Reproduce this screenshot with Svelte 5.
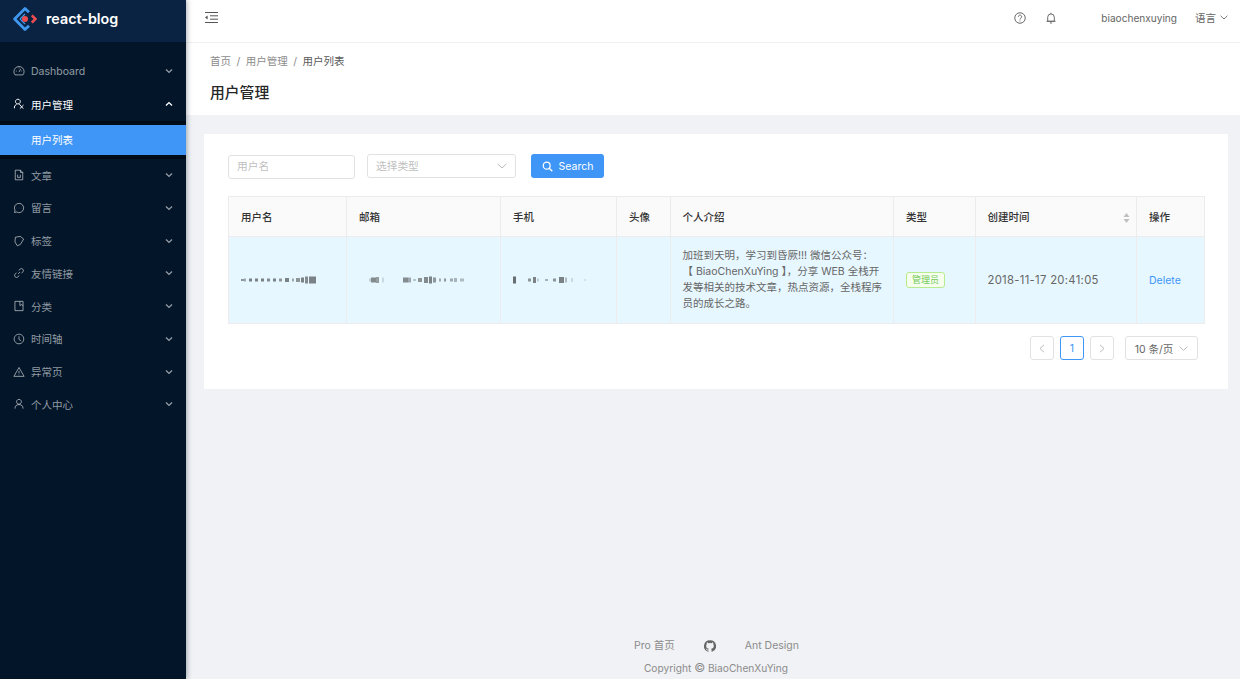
<script>
  const menu = [
    { name: 'Dashboard', icon: 'dash' },
    { name: '用户管理', icon: 'users', open: true, children: ['用户列表'] },
    { name: '文章', icon: 'file' },
    { name: '留言', icon: 'msg' },
    { name: '标签', icon: 'tag' },
    { name: '友情链接', icon: 'link' },
    { name: '分类', icon: 'book' },
    { name: '时间轴', icon: 'clock' },
    { name: '异常页', icon: 'warn' },
    { name: '个人中心', icon: 'user' }
  ];

  const icons = {
    dash: 'M2.8 13.2A6.8 6.8 0 1 1 13.2 13.2ZM8 9.4 10.2 5.4M8 3.4V4.6M3.8 8H5M11.2 8H12.2',
    users: 'M6.6 1.6a3.2 3.2 0 1 1-.1 0ZM1.8 13.8a5 5 0 0 1 3-5.4M8.4 8.2l5.2 6M14 9.4l-4.8 4.8',
    file: 'M3 1.6H10L13 4.6V14.4H3ZM10 1.6V4.6H13M6.2 7.6V11.2H9.8V7.6',
    msg: 'M8 1.8a6.2 6.2 0 1 1-3.2 11.5L2 14l.7-2.8A6.2 6.2 0 0 1 8 1.8ZM5 8H5.3M7.9 8H8.2M10.8 8H11.1',
    tag: 'M3.2 3 9.6 1.8 14.2 5.4 9.8 12.6 5.8 14.4 2.6 9.2ZM10.2 5H10.4',
    link: 'M6.8 9.2 9.4 6.6M7.6 4.6 9.4 2.9a2.6 2.6 0 0 1 3.7 3.7L11.3 8.4M8.4 11.4 6.6 13.1a2.6 2.6 0 0 1-3.7-3.7L4.7 7.6',
    book: 'M2.6 1.8H13.4V14.2H2.6ZM9.2 1.8V7.4L11.2 6.2 13.4 7.4',
    clock: 'M8 1.6a6.4 6.4 0 1 1-.1 0ZM8 4.4V8.6L10.6 10.4',
    warn: 'M8 2 14.8 13.8H1.2ZM8 6.4V10M8 11.4V12.2',
    user: 'M8 1.8a3.2 3.2 0 1 1-.1 0ZM2.6 14.2a5.4 5.4 0 0 1 10.8 0'
  };

  const columns = [
    { title: '用户名', width: 118 },
    { title: '邮箱', width: 154 },
    { title: '手机', width: 116 },
    { title: '头像', width: 53.5 },
    { title: '个人介绍', width: 223.5 },
    { title: '类型', width: 81.5 },
    { title: '创建时间', width: 161.5, sort: true },
    { title: '操作', width: 68 }
  ];

  // pixelated masks of the private values: [x, width, height, darkness]
  const nameBlur = [[0,3,2,.5],[3,2,3,.4],[8,3,3,.6],[14,3,3,.6],[20,3,3,.6],[26,3,3,.55],[32,3,3,.6],[38,3,3,.5],[44,4,4,.6],[51,2,3,.4],[55,4,4,.5],[60,3,5,.6],[64,3,7,.55],[68,7,7,.6]];
  const mailBlur = [[0,2,3,.2],[2,5,5,.55],[7,3,6,.45],[13,2,5,.15],[34,5,5,.55],[39,3,5,.4],[44,3,2,.25],[49,4,4,.5],[55,4,6,.55],[60,3,7,.6],[64,3,5,.5],[70,2,3,.4],[75,2,3,.5],[81,3,3,.4],[85,3,4,.35],[91,4,3,.3]];
  const phoneBlur = [[0,3,7,.7],[15,3,3,.5],[20,3,6,.6],[24,2,3,.2],[32,3,2,.35],[40,3,3,.5],[46,5,6,.6],[52,2,5,.3],[58,2,4,.15],[71,2,2,.1]];
</script>

{#snippet blur(cells)}
  <svg class="blur" width="100" height="10" viewBox="0 0 100 10" aria-hidden="true">
    {#each cells as c}
      <rect x={c[0]} y={5 - c[2] / 2} width={c[1]} height={c[2]} fill="#333" opacity={c[3]} />
    {/each}
  </svg>
{/snippet}

{#snippet chevron(up)}
  <svg class="arrow" width="8" height="6" viewBox="0 0 8 6" aria-hidden="true">
    <path d={up ? 'M1 4.4 4 1.6 7 4.4' : 'M1 1.6 4 4.4 7 1.6'} fill="none" stroke="currentColor" stroke-width="1.4" />
  </svg>
{/snippet}

<div class="layout">
  <aside class="sider">
    <div class="logo">
      <svg width="24" height="24" viewBox="0 0 24 24" aria-hidden="true">
        <path d="M16 5.3 12 1.6 1.6 12 12 22.4 16 18.7" fill="none" stroke="#3f97ee" stroke-width="2.8" stroke-linejoin="round" />
        <path d="M7 12 12 7M7 12 12 17" fill="none" stroke="#3f97ee" stroke-width="1.2" />
        <path d="M18.8 8.4 22.4 12 18.8 15.6" fill="none" stroke="#ec4d4f" stroke-width="2.6" />
        <circle cx="12" cy="12" r="3" fill="#ec4d4f" />
      </svg>
      <span>react-blog</span>
    </div>
    <nav class="menu">
      {#each menu as item}
        <div class="item" class:open={item.open}>
          <svg class="icon" width="12" height="12" viewBox="0 0 16 16" aria-hidden="true">
            <path d={icons[item.icon]} fill="none" stroke="currentColor" stroke-width="1.3" />
          </svg>
          <span class="label">{item.name}</span>
          {@render chevron(item.open)}
        </div>
        {#if item.children}
          <div class="submenu">
            {#each item.children as child}
              <div class="subitem">{child}</div>
            {/each}
          </div>
        {/if}
      {/each}
    </nav>
  </aside>

  <main class="main">
    <header class="topbar">
      <svg class="fold" width="13" height="11" viewBox="0 0 13 11" aria-hidden="true">
        <path d="M0 .5H13M5 3.8H13M5 7.2H13M0 10.5H13" stroke="#555" stroke-width="1" fill="none" />
        <path d="M0 5.5 2.6 3.6V7.4Z" fill="#555" />
      </svg>
      <div class="spacer"></div>
      <svg class="tool" width="12" height="12" viewBox="0 0 16 16" aria-hidden="true">
        <circle cx="8" cy="8" r="7" fill="none" stroke="#666" stroke-width="1.3" />
        <path d="M5.8 6.2a2.2 2.2 0 1 1 3.4 1.9C8.4 8.6 8 9 8 10M8 11.4V12.6" fill="none" stroke="#666" stroke-width="1.3" />
      </svg>
      <svg class="tool bell" width="12" height="12" viewBox="0 0 16 16" aria-hidden="true">
        <path d="M8 1V2.4M3.6 12.4V7a4.4 4.4 0 0 1 8.8 0V12.4ZM2 12.4H14M6.6 14.6H9.4" fill="none" stroke="#666" stroke-width="1.3" />
      </svg>
      <span class="username">biaochenxuying</span>
      <span class="lang">语言</span>
      <svg class="lang-arrow" width="8" height="5" viewBox="0 0 8 5" aria-hidden="true">
        <path d="M.6.8 4 4 7.4.8" fill="none" stroke="#777" />
      </svg>
    </header>

    <section class="page-head">
      <div class="crumbs">
        <span>首页</span><i>/</i><span>用户管理</span><i>/</i><span class="current">用户列表</span>
      </div>
      <h1>用户管理</h1>
    </section>

    <section class="card">
      <div class="filters">
        <div class="input">用户名</div>
        <div class="select">
          <span>选择类型</span>
          <svg width="10" height="6" viewBox="0 0 10 6" aria-hidden="true"><path d="M.6.8 5 5 9.4.8" fill="none" stroke="#bbb" /></svg>
        </div>
        <button class="search">
          <svg width="11" height="11" viewBox="0 0 16 16" aria-hidden="true">
            <circle cx="6.8" cy="6.8" r="5" fill="none" stroke="#fff" stroke-width="1.8" />
            <path d="M10.5 10.5 15 15" stroke="#fff" stroke-width="1.8" />
          </svg>
          Search
        </button>
      </div>

      <table>
        <colgroup>
          {#each columns as col}
            <col style="width: {col.width}px" />
          {/each}
        </colgroup>
        <thead>
          <tr>
            {#each columns as col}
              <th>
                {col.title}
                {#if col.sort}
                  <svg class="sorter" width="7" height="10" viewBox="0 0 7 10" aria-hidden="true">
                    <path d="M3.5 0 6.5 4H.5ZM3.5 10 .5 6H6.5Z" fill="#bfbfbf" />
                  </svg>
                {/if}
              </th>
            {/each}
          </tr>
        </thead>
        <tbody>
          <tr>
            <td>{@render blur(nameBlur)}</td>
            <td class="mail-cell">{@render blur(mailBlur)}</td>
            <td>{@render blur(phoneBlur)}</td>
            <td></td>
            <td class="intro">加班到天明，学习到昏厥!!! 微信公众号：<br />【 BiaoChenXuYing 】，分享 WEB 全栈开<br />发等相关的技术文章，热点资源，全栈程序<br />员的成长之路。</td>
            <td><span class="tag">管理员</span></td>
            <td class="date">2018-11-17 20:41:05</td>
            <td><span class="delete">Delete</span></td>
          </tr>
        </tbody>
      </table>

      <div class="pager">
        <span class="page">
          <svg width="6" height="9" viewBox="0 0 6 9" aria-hidden="true"><path d="M5 .8 1 4.5 5 8.2" fill="none" stroke="#bbb" /></svg>
        </span>
        <span class="page active">1</span>
        <span class="page">
          <svg width="6" height="9" viewBox="0 0 6 9" aria-hidden="true"><path d="M1 .8 5 4.5 1 8.2" fill="none" stroke="#bbb" /></svg>
        </span>
        <span class="size">
          10 条/页
          <svg width="9" height="5" viewBox="0 0 9 5" aria-hidden="true"><path d="M.5.6 4.5 4.4 8.5.6" fill="none" stroke="#bbb" /></svg>
        </span>
      </div>
    </section>

    <footer class="footer">
      <div class="links">
        <span>Pro 首页</span>
        <svg width="12" height="12" viewBox="0 0 16 16" aria-hidden="true">
          <path fill="#666" d="M8 .2a8 8 0 0 0-2.5 15.6c.4.1.5-.2.5-.4v-1.4c-2.2.5-2.7-1-2.7-1-.4-.9-.9-1.2-.9-1.2-.7-.5.1-.5.1-.5.8.1 1.2.8 1.2.8.7 1.2 1.9.9 2.3.7.1-.5.3-.9.5-1.1-1.8-.2-3.6-.9-3.6-4 0-.9.3-1.6.8-2.1-.1-.2-.4-1 .1-2.1 0 0 .7-.2 2.2.8a7.6 7.6 0 0 1 4 0c1.5-1 2.2-.8 2.2-.8.5 1.1.2 1.9.1 2.1.5.5.8 1.2.8 2.1 0 3.1-1.9 3.8-3.6 4 .3.2.6.7.6 1.5v2.2c0 .2.1.5.5.4A8 8 0 0 0 8 .2Z" />
        </svg>
        <span>Ant Design</span>
      </div>
      <div class="copy">Copyright <span class="circle">©</span> BiaoChenXuYing</div>
    </footer>
  </main>
</div>

<style>
  :global(body) {
    margin: 0;
    overflow: hidden;
    font-family: Inter, "Noto Sans CJK SC", sans-serif;
  }
  .layout {
    display: flex;
    height: 679px;
    background: #f0f2f5;
    font-size: 10.5px;
    color: #666;
  }

  .sider {
    position: relative;
    z-index: 2;
    width: 186px;
    flex: none;
    background: #021529;
    box-shadow: 1px 0 5px rgba(0, 21, 41, 0.35);
  }
  .logo {
    height: 42px;
    box-sizing: border-box;
    display: flex;
    align-items: center;
    gap: 9px;
    padding: 0 0 5px 13px;
    background: #0a2342;
    color: #fff;
    font-size: 14.3px;
    font-weight: 600;
  }
  .menu {
    padding-top: 13px;
  }
  .item {
    height: 32.75px;
    display: flex;
    align-items: center;
    padding-left: 13px;
    padding-right: 13px;
    color: rgba(255, 255, 255, 0.58);
  }
  .item.open {
    color: #fff;
  }
  .icon {
    margin-right: 6px;
  }
  .label {
    flex: 1;
  }
  .submenu {
    background: #000c17;
    padding: 4.4px 0 3.9px;
  }
  .subitem {
    height: 30px;
    line-height: 31px;
    padding-left: 31px;
    background: #4096f7;
    color: #fff;
  }

  .main {
    flex: 1;
    min-width: 0;
    display: flex;
    flex-direction: column;
  }
  .topbar {
    height: 43px;
    box-sizing: border-box;
    display: flex;
    align-items: center;
    background: #fff;
    border-bottom: 1px solid #f0f0f0;
    padding: 0 12px 7px 19px;
  }
  .topbar > * {
    flex: none;
  }
  .topbar .spacer {
    flex: 1;
  }
  .tool {
    margin-top: 1px;
  }
  .bell {
    margin-left: 19px;
  }
  .username {
    margin-left: 44px;
    font-size: 10.1px;
  }
  .lang {
    margin-left: 18px;
  }
  .lang-arrow {
    margin-left: 4px;
  }

  .page-head {
    height: 72px;
    box-sizing: border-box;
    background: #fff;
    padding: 11px 24px 0;
  }
  .crumbs {
    line-height: 15px;
    color: #8c8c8c;
  }
  .crumbs i {
    font-style: normal;
    margin: 0 5.5px;
  }
  .crumbs .current {
    color: #595959;
  }
  h1 {
    margin: 13px 0 0;
    font-size: 14.8px;
    line-height: 22px;
    font-weight: 500;
    color: #262626;
  }

  .card {
    margin: 19px 12px 0 18px;
    height: 255px;
    box-sizing: border-box;
    background: #fff;
    padding: 20px 24px 0;
  }
  .filters {
    display: flex;
    align-items: center;
    height: 24px;
    margin-bottom: 18px;
  }
  .input,
  .select {
    height: 24px;
    box-sizing: border-box;
    border: 1px solid #e2e2e2;
    border-radius: 3px;
    color: #bfbfbf;
    line-height: 22px;
    padding-left: 8px;
    font-size: 10.7px;
  }
  .input {
    width: 127px;
    margin-right: 12px;
    margin-top: 1px;
  }
  .select {
    width: 149px;
    margin-right: 15px;
    display: flex;
    align-items: center;
    justify-content: space-between;
    padding-right: 8px;
  }
  .select span {
    margin-top: 2px;
  }
  .search {
    width: 73px;
    height: 24px;
    border: none;
    border-radius: 3px;
    background: #4096f7;
    color: #fff;
    font: inherit;
    display: flex;
    align-items: center;
    justify-content: center;
    gap: 6px;
    padding: 0;
  }

  table {
    table-layout: fixed;
    width: 976px;
    border-collapse: collapse;
    border: 1px solid #ececec;
  }
  th,
  td {
    border: 1px solid #ececec;
    padding: 0 12px;
    text-align: left;
  }
  th {
    position: relative;
    height: 39px;
    background: #fafafa;
    color: #333;
    font-weight: 500;
  }
  td {
    height: 86px;
    background: #e6f7ff;
  }
  .sorter {
    position: absolute;
    right: 6px;
    top: 16px;
  }
  .blur {
    display: block;
    filter: blur(0.5px);
  }
  .mail-cell .blur {
    margin-left: 10px;
  }
  .intro {
    line-height: 15.8px;
    white-space: nowrap;
  }
  .tag {
    display: inline-block;
    height: 16px;
    line-height: 14px;
    padding: 0 5px;
    box-sizing: border-box;
    border: 1px solid #b7eb8f;
    border-radius: 3px;
    background: #f6ffed;
    color: #73c85a;
    font-size: 9px;
  }
  .date {
    font-size: 11.3px;
    letter-spacing: 0.3px;
  }
  .delete {
    color: #4096f7;
  }

  .pager {
    display: flex;
    justify-content: flex-end;
    margin: 12px 6px 0 0;
    gap: 6px;
  }
  .page,
  .size {
    height: 24px;
    box-sizing: border-box;
    border: 1px solid #e2e2e2;
    border-radius: 3px;
    display: flex;
    align-items: center;
    justify-content: center;
  }
  .page {
    width: 24px;
  }
  .page.active {
    border-color: #4096f7;
    color: #4096f7;
  }
  .size {
    width: 73px;
    margin-left: 5px;
    gap: 6px;
  }

  .footer {
    margin-top: auto;
    padding: 0 0 3px 6px;
    text-align: center;
    color: #8c8c8c;
  }
  .links {
    display: flex;
    justify-content: center;
    align-items: center;
    gap: 29px;
    line-height: 16px;
    margin: 0 0 6px 1px;
  }
  .copy {
    line-height: 16px;
    font-size: 10.2px;
  }
  .circle {
    font-size: 12px;
    line-height: 12px;
  }
</style>
